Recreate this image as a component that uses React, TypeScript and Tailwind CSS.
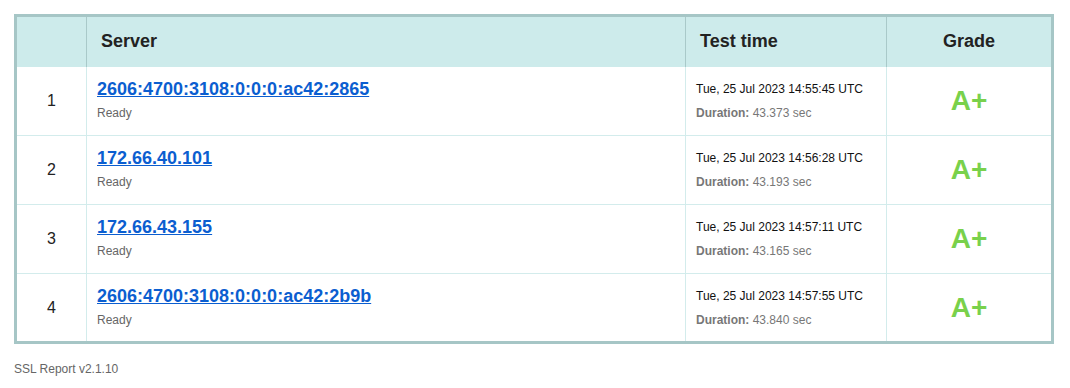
import React from 'react';

type Row = {
  id: number;
  server: string;
  time: string;
  duration: string;
  grade: string;
};

const rows: Row[] = [
  { id: 1, server: '2606:4700:3108:0:0:0:ac42:2865', time: 'Tue, 25 Jul 2023 14:55:45 UTC', duration: '43.373 sec', grade: 'A+' },
  { id: 2, server: '172.66.40.101', time: 'Tue, 25 Jul 2023 14:56:28 UTC', duration: '43.193 sec', grade: 'A+' },
  { id: 3, server: '172.66.43.155', time: 'Tue, 25 Jul 2023 14:57:11 UTC', duration: '43.165 sec', grade: 'A+' },
  { id: 4, server: '2606:4700:3108:0:0:0:ac42:2b9b', time: 'Tue, 25 Jul 2023 14:57:55 UTC', duration: '43.840 sec', grade: 'A+' },
];

const cols = 'grid grid-cols-[70px_599px_201px_164px]';

export default function App() {
  return (
    <div className="bg-white min-h-[388px] pt-[14px] pl-[14px] font-['Liberation_Sans',Arial,sans-serif] text-[#222]">
      <div className="w-[1040px] border-[3px] border-[#a6c6c6]">
        {/* Header */}
        <div className={`${cols} h-[50px] bg-[#cdebeb] text-[18px] font-bold`}>
          <div className="border-r border-[#a9c9c9]" />
          <div className="border-r border-[#a9c9c9] flex items-center pl-[14px] pb-[1px]">Server</div>
          <div className="border-r border-[#a9c9c9] flex items-center pl-[14px] pb-[1px]">Test time</div>
          <div className="flex items-center justify-center pb-[1px]">Grade</div>
        </div>

        {/* Body */}
        {rows.map((r, i) => {
          const last = i === rows.length - 1;
          const rowCls = last ? 'h-[67px]' : 'h-[69px] border-b border-[#d3ecec]';
          return (
            <div key={r.id} className={`${cols} ${rowCls}`}>
              <div className="border-r border-[#d3ecec] flex items-center justify-center text-[16px]">{r.id}</div>
              <div className="border-r border-[#d3ecec] flex flex-col justify-center pl-[10px] pb-[3px]">
                <a href="#" className="text-[18px] font-bold text-[#0b5ed0] underline leading-[22px]">{r.server}</a>
                <div className="text-[12px] text-[#666] mt-[5px] leading-[16px]">Ready</div>
              </div>
              <div className="border-r border-[#d3ecec] flex flex-col justify-center pl-[10px] text-[12px]">
                <div className="leading-[16px] text-[#111]">{r.time}</div>
                <div className="leading-[16px] mt-[8px] text-[#777]">
                  <span className="font-bold">Duration:</span> {r.duration}
                </div>
              </div>
              <div className="flex items-center justify-center text-[28px] font-bold text-[#79d14b]">{r.grade}</div>
            </div>
          );
        })}
      </div>
      <div className="mt-[16px] text-[12px] text-[#666]">SSL Report v2.1.10</div>
    </div>
  );
}
